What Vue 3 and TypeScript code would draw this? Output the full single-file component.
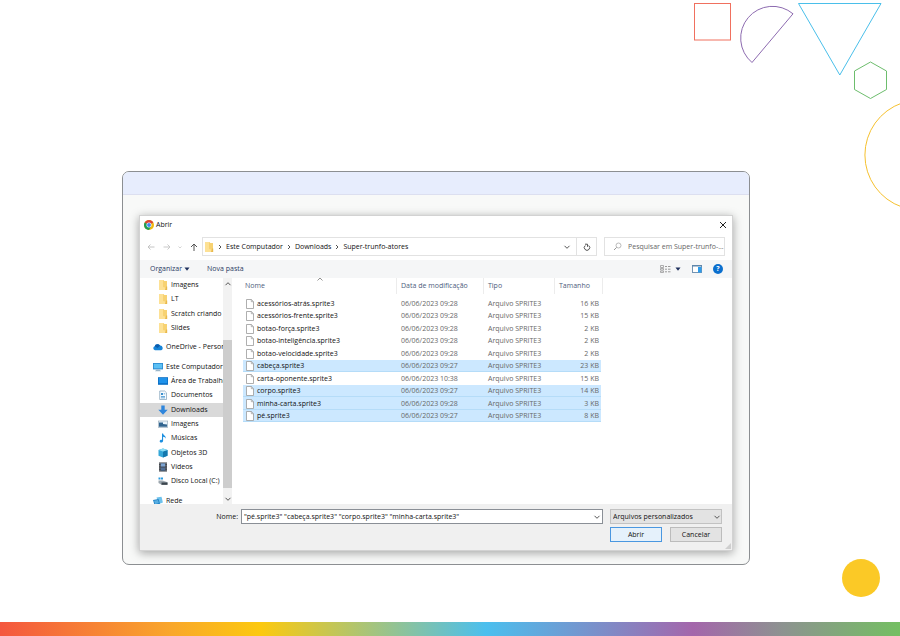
<script setup lang="ts">
import { ref } from 'vue'

interface Place {
  label: string
  icon: string
  level: 0 | 1
  group?: boolean
  current?: boolean
}

interface FileRow {
  name: string
  date: string
  size: string
  selected?: boolean
}

const places: Place[] = [
  { label: 'Imagens', icon: 'folder', level: 1 },
  { label: 'LT', icon: 'folder', level: 1 },
  { label: 'Scratch criando', icon: 'folder', level: 1 },
  { label: 'Slides', icon: 'folder', level: 1 },
  { label: 'OneDrive - Personal', icon: 'cloud', level: 0, group: true },
  { label: 'Este Computador', icon: 'computer', level: 0, group: true },
  { label: 'Área de Trabalho', icon: 'desktop', level: 1 },
  { label: 'Documentos', icon: 'document', level: 1 },
  { label: 'Downloads', icon: 'download', level: 1, current: true },
  { label: 'Imagens', icon: 'picture', level: 1 },
  { label: 'Músicas', icon: 'music', level: 1 },
  { label: 'Objetos 3D', icon: 'cube', level: 1 },
  { label: 'Vídeos', icon: 'film', level: 1 },
  { label: 'Disco Local (C:)', icon: 'disk', level: 1 },
  { label: 'Rede', icon: 'network', level: 0, group: true },
]

const files = ref<FileRow[]>([
  { name: 'acessórios-atrás.sprite3', date: '06/06/2023 09:28', size: '16 KB' },
  { name: 'acessórios-frente.sprite3', date: '06/06/2023 09:28', size: '15 KB' },
  { name: 'botao-força.sprite3', date: '06/06/2023 09:28', size: '2 KB' },
  { name: 'botao-inteligência.sprite3', date: '06/06/2023 09:28', size: '2 KB' },
  { name: 'botao-velocidade.sprite3', date: '06/06/2023 09:28', size: '2 KB' },
  { name: 'cabeça.sprite3', date: '06/06/2023 09:27', size: '23 KB', selected: true },
  { name: 'carta-oponente.sprite3', date: '06/06/2023 10:38', size: '15 KB' },
  { name: 'corpo.sprite3', date: '06/06/2023 09:27', size: '14 KB', selected: true },
  { name: 'minha-carta.sprite3', date: '06/06/2023 09:28', size: '3 KB', selected: true },
  { name: 'pé.sprite3', date: '06/06/2023 09:27', size: '8 KB', selected: true },
])

const path = ['Este Computador', 'Downloads', 'Super-trunfo-atores']
const fileName = ref('"pé.sprite3" "cabeça.sprite3" "corpo.sprite3" "minha-carta.sprite3"')
const search = ref('')
</script>

<template>
  <svg class="symbols" aria-hidden="true">
    <symbol id="folder" viewBox="0 0 10 10">
      <path d="M1 0h4.500l.8 1H9v9H1z" fill="#f7d272" />
      <path d="M1 0h4v7l4 1v2H1z" fill="#fde195" />
      <path d="M8 6.500h1.200V10H7z" fill="#e9b94c" />
    </symbol>
    <symbol id="cloud" viewBox="0 0 10 10">
      <path d="M2 8.200a2 2 0 0 1-.3-3.900A3 3 0 0 1 7 3.600a2.400 2.400 0 0 1 1.200 4.600z" fill="#1684d8" />
      <path d="M1.700 4.300A3 3 0 0 1 7 3.600L4.600 6z" fill="#0b5cad" />
    </symbol>
    <symbol id="computer" viewBox="0 0 10 10">
      <rect x="0" y="1" width="10" height="6.400" fill="#2a88cf" />
      <rect x=".8" y="1.800" width="8.400" height="4.600" fill="#5cc0f4" />
      <path d="M3.500 7.400h3L8 9.200H2z" fill="#9ab6c9" />
    </symbol>
    <symbol id="desktop" viewBox="0 0 10 10">
      <rect x="0" y="1.200" width="10" height="7.600" fill="#0c6fc4" />
      <rect x=".8" y="2" width="8.400" height="5.200" fill="#1f92ea" />
    </symbol>
    <symbol id="document" viewBox="0 0 10 10">
      <path d="M1.700 1h5L8.500 2.800V9.500H1.700z" fill="#f7fbfe" stroke="#7f9fb8" stroke-width=".7" />
      <path d="M3 3h2v2H3zM3 6h4v.8H3zM3 7.600h4v.7H3zM5.700 3.500h1.500v.8H5.700z" fill="#3c90cd" />
    </symbol>
    <symbol id="download" viewBox="0 0 10 10">
      <path d="M3.300 .5h3.400v4.300h3L5 9.700.3 4.800h3z" fill="#2f86dc" />
    </symbol>
    <symbol id="picture" viewBox="0 0 10 10">
      <rect x=".3" y="2" width="9.400" height="6.400" fill="#e9f3fa" stroke="#8fa5b5" stroke-width=".6" />
      <path d="M1 3.500h4v1.500l4 .5v2.200H1z" fill="#31648f" />
    </symbol>
    <symbol id="music" viewBox="0 0 10 10">
      <path d="M4 .5h1.100c.2 2 3.200 2.300 2.600 5.200-.4-1.300-1.300-1.700-2.600-1.900v4c0 1.200-.8 1.800-1.900 1.800S1.500 9 1.700 8.100c.2-1 1.300-1.400 2.300-1.200z" fill="#1c8fe0" />
    </symbol>
    <symbol id="cube" viewBox="0 0 10 10">
      <path d="M.5 2L5 .5 9.500 2v5.700L5 9.500 .5 7.700z" fill="#35a7d8" />
      <path d="M5 3.500L9.500 2v5.700L5 9.500z" fill="#1478ae" />
      <path d="M.5 2L5 .5 9.500 2 5 3.500z" fill="#8bdcf4" />
    </symbol>
    <symbol id="film" viewBox="0 0 10 10">
      <rect x="1" y=".5" width="8" height="9" fill="#35393f" />
      <rect x="2.800" y="1.300" width="4.400" height="3.300" fill="#7da4d2" />
      <rect x="2.800" y="5.400" width="4.400" height="3.300" fill="#516f96" />
      <path d="M1.900 1v8.500M8.100 1v8.500" stroke="#d5d8dc" stroke-width=".7" stroke-dasharray=".9 .9" />
    </symbol>
    <symbol id="disk" viewBox="0 0 10 10">
      <path d="M.5 1.500h2v2h-2zM3 1.500h2v2H3z" fill="#2b9be0" />
      <path d="M.5 4.500h4l5 1.800v2.500H3.500L.5 7z" fill="#9ca6ae" />
      <path d="M3.500 6.500h6v2.300h-6z" fill="#3b444c" />
    </symbol>
    <symbol id="network" viewBox="0 0 10 10">
      <path d="M3.500 1.500l5-.7 1.400 5.700-4 1.500z" fill="#6cc1ec" />
      <path d="M0 4l5.500-1 1.500 4.800-5.300 1.900z" fill="#2181c4" />
      <path d="M1 4.800l3.900-.8 1 3-3.600 1.200z" fill="#58aee2" />
    </symbol>
    <symbol id="sheet" viewBox="0 0 8 10">
      <path d="M.5.5h4.800L7.500 2.700v6.800h-7z" fill="#fff" stroke="#9a9a9a" stroke-width=".8" />
      <path d="M5.300.5v2.200h2.200" fill="none" stroke="#9a9a9a" stroke-width=".7" />
    </symbol>
    <symbol id="chevron" viewBox="0 0 8 8">
      <path d="M1.500 2.800L4 5.300l2.500-2.500" fill="none" stroke="currentColor" />
    </symbol>
    <symbol id="triangle" viewBox="0 0 6 6">
      <path d="M.5 1.500h5L3 4.700z" fill="currentColor" />
    </symbol>
  </svg>

  <div class="page">
    <svg class="shapes" viewBox="0 0 220 220" fill="none" aria-hidden="true">
      <rect x="14.500" y="3.500" width="36" height="36.500" stroke="#f0705f" />
      <path d="M72 62.500A31.700 31.700 0 0 1 113 13.800z" stroke="#8d6bb0" />
      <path d="M118.500 3.500h82.500L159.800 75z" stroke="#4abfea" />
      <path d="M190.500 62l16 9v18.500l-16 9-16-9V71z" stroke="#6dbd6d" />
      <path d="M222 103A55 55 0 0 0 222 207" stroke="#f6c12f" />
    </svg>

    <main class="stage">
      <div class="window">
        <div class="band"></div>
        <div class="backdrop">
          <section class="dialog" role="dialog" aria-labelledby="dialog-title">
            <header class="title">
              <svg class="chrome" viewBox="0 0 20 20" aria-hidden="true">
                <circle cx="10" cy="10" r="10" fill="#f2b90f" />
                <path d="M10 10L1.340 5A10 10 0 0 1 18.660 5z" fill="#dc4437" />
                <path d="M1.340 5A10 10 0 0 0 10 20l4.300-7.500L10 10z" fill="#1f9d58" />
                <circle cx="10" cy="10" r="5" fill="#fff" />
                <circle cx="10" cy="10" r="3.900" fill="#4285f4" />
              </svg>
              <h1 id="dialog-title">Abrir</h1>
              <button class="close" type="button" aria-label="Fechar">
                <svg viewBox="0 0 8 8"><path d="M1 1l6 6M7 1L1 7" stroke="#222" fill="none" /></svg>
              </button>
            </header>

            <nav class="navigation">
              <div class="arrows">
                <button type="button" aria-label="Voltar">
                  <svg viewBox="0 0 8 8"><path d="M7.500 4H1M3.500 1.500L1 4l2.500 2.500" stroke="#c4c4c4" fill="none" /></svg>
                </button>
                <button type="button" aria-label="Avançar">
                  <svg viewBox="0 0 8 8"><path d="M.5 4H7M4.500 1.500L7 4 4.500 6.500" stroke="#c9c9c9" fill="none" /></svg>
                </button>
                <button class="recent" type="button" aria-label="Locais recentes">
                  <svg viewBox="0 0 8 8"><path d="M2.500 3.500L4 5l1.500-1.500" stroke="#d4d4d4" fill="none" /></svg>
                </button>
                <button type="button" aria-label="Acima">
                  <svg viewBox="0 0 8 8"><path d="M4 8V1M1 4l3-3 3 3" stroke="#555" fill="none" /></svg>
                </button>
              </div>
              <div class="address">
                <svg class="icon"><use href="#folder" /></svg>
                <template v-for="step in path" :key="step">
                  <svg class="step" viewBox="0 0 8 8" aria-hidden="true"><path d="M3 2l2 2-2 2" stroke="#555" fill="none" /></svg>
                  <button type="button">{{ step }}</button>
                </template>
                <button class="history" type="button" aria-label="Locais anteriores">
                  <svg class="small"><use href="#chevron" /></svg>
                </button>
              </div>
              <button class="refresh" type="button" aria-label="Atualizar">
                <svg viewBox="0 0 8 8"><path d="M2.300 2.500a2.700 2.700 0 1 0 3.400 0M2 1.200h2.500v2.600" stroke="#555" fill="none" /></svg>
              </button>
              <label class="search">
                <svg viewBox="0 0 9 9" aria-hidden="true"><path d="M1 8l2.700-2.700" stroke="#999" /><circle cx="5.500" cy="3.500" r="2.500" fill="none" stroke="#aaa" stroke-width=".8" /></svg>
                <input v-model="search" type="text" placeholder="Pesquisar em Super-trunfo-..." aria-label="Pesquisar" />
              </label>
            </nav>

            <div class="toolbar">
              <button type="button">Organizar <svg class="tri"><use href="#triangle" /></svg></button>
              <button type="button">Nova pasta</button>
              <div class="views">
                <button type="button" aria-label="Modo de exibição">
                  <svg class="list" viewBox="0 0 11 8"><path d="M.5 .5h3v2h-3zM.5 3.500h3v1.500h-3zM.5 6h3v1.500h-3z" fill="none" stroke="#999" stroke-width=".8" /><path d="M5 1.500h2M8 1.500h2.500M5 4.200h2M8 4.200h2.500M5 6.800h2M8 6.800h2.500" stroke="#999" /></svg>
                  <svg class="tri"><use href="#triangle" /></svg>
                </button>
                <button type="button" aria-label="Painel de visualização">
                  <svg class="pane" viewBox="0 0 10 8"><rect x=".5" y=".5" width="9" height="7" fill="#fff" stroke="#7394b3" /><path d="M0 0h10v1.500H0z" fill="#5e86ab" /><path d="M6 2h3.500v5.500H6z" fill="#2d9bea" /></svg>
                </button>
                <button class="help" type="button" aria-label="Ajuda">?</button>
              </div>
            </div>

            <div class="panes">
              <aside class="tree">
                <ul>
                  <li v-for="(place, i) in places" :key="i" :class="{ nested: place.level === 1, group: place.group, current: place.current }">
                    <a href="#"><svg class="icon" aria-hidden="true"><use :href="'#' + place.icon" /></svg>{{ place.label }}</a>
                  </li>
                </ul>
                <div class="scrollbar" aria-hidden="true">
                  <svg class="small flip"><use href="#chevron" /></svg>
                  <div class="thumb"></div>
                  <svg class="small"><use href="#chevron" /></svg>
                </div>
              </aside>

              <div class="files">
                <table>
                  <thead>
                    <tr>
                      <th class="name" aria-sort="ascending">Nome<svg class="sort" viewBox="0 0 8 8"><path d="M1.500 5.500L4 3l2.500 2.500" fill="none" stroke="#777" stroke-width=".8" /></svg></th>
                      <th class="date">Data de modificação</th>
                      <th class="type">Tipo</th>
                      <th class="size">Tamanho</th>
                    </tr>
                  </thead>
                  <tbody>
                    <tr v-for="file in files" :key="file.name" :class="{ selected: file.selected }" @click="file.selected = !file.selected">
                      <td class="name"><svg aria-hidden="true"><use href="#sheet" /></svg>{{ file.name }}</td>
                      <td>{{ file.date }}</td>
                      <td>Arquivo SPRITE3</td>
                      <td class="size">{{ file.size }}</td>
                    </tr>
                  </tbody>
                </table>
              </div>
            </div>

            <form class="actions" @submit.prevent>
              <label for="file-name">Nome:</label>
              <div class="combo">
                <input id="file-name" v-model="fileName" type="text" />
                <svg class="small" aria-hidden="true"><use href="#chevron" /></svg>
              </div>
              <div class="filter">
                <select aria-label="Tipo de arquivo">
                  <option>Arquivos personalizados</option>
                </select>
                <svg class="small" aria-hidden="true"><use href="#chevron" /></svg>
              </div>
              <div class="buttons">
                <button class="primary" type="submit">Abrir</button>
                <button type="button">Cancelar</button>
              </div>
              <svg class="grip" viewBox="0 0 6 6" aria-hidden="true"><path d="M6 0v6H0z" fill="#cfcfcf" /></svg>
            </form>
          </section>
        </div>
      </div>
    </main>

    <div class="dot"></div>
    <footer class="stripe"></footer>
  </div>
</template>

<style>
body {
  margin: 0;
  background: #fff;
}
</style>

<style scoped>
* {
  box-sizing: border-box;
}

.symbols {
  position: absolute;
  width: 0;
  height: 0;
}

.page {
  position: relative;
  display: flex;
  flex-direction: column;
  min-height: 100vh;
  overflow: hidden;
  font-family: "Open Sans", "Noto Sans", sans-serif;
  font-size: 7px;
  line-height: 10px;
  color: #111;
}

.shapes {
  position: absolute;
  top: 0;
  right: 0;
  width: 220px;
  height: 220px;
}

.dot {
  position: absolute;
  right: 20px;
  bottom: 39px;
  width: 38px;
  height: 38px;
  border-radius: 50%;
  background: #fbc926;
}

.stripe {
  height: 14px;
  margin-top: auto;
  background: linear-gradient(90deg, #f4573f 0%, #f9a72b 19%, #fcc90f 29%, #4bbfee 54%, #a466ab 77%, #8d9390 87%, #74bf62 100%);
}

.stage {
  padding: 171px 150px 24px 122px;
}

.window {
  overflow: hidden;
  border: 1px solid #8c8f92;
  border-radius: 7px;
  background: #f8f9f8;
}

.band {
  height: 23px;
  border-bottom: 1px solid #dcdff0;
  background: #e7edfd;
}

.backdrop {
  padding: 20px 16px 13px;
}

.dialog {
  border: 1px solid #d2d2d2;
  background: #fff;
  box-shadow: 0 2px 9px rgba(0, 0, 0, 0.35);
}

button,
input,
select {
  margin: 0;
  padding: 0;
  border: 0;
  border-radius: 0;
  background: none;
  color: inherit;
  font: inherit;
}

button {
  display: flex;
  align-items: center;
  justify-content: center;
}

svg {
  flex: none;
}

.icon {
  width: 10px;
  height: 10px;
}

.small {
  width: 8px;
  height: 8px;
  color: #555;
}

.tri {
  width: 6px;
  height: 6px;
  color: #1e2f5c;
}

.title {
  display: flex;
  align-items: center;
  gap: 2px;
  height: 17px;
  padding: 0 5px 0 4px;
}

.title h1 {
  margin: 0;
  font-size: 7px;
  font-weight: 400;
}

.chrome {
  width: 10px;
  height: 10px;
}

.close {
  margin-left: auto;
}

.close svg,
.refresh svg,
.arrows svg {
  width: 8px;
  height: 8px;
}

.navigation {
  display: flex;
  align-items: center;
  height: 27px;
  padding: 0 7px 0 6px;
}

.arrows {
  display: flex;
  align-items: center;
  justify-content: space-between;
  width: 56px;
  padding: 0 4px 0 1px;
}

.arrows .recent {
  width: 4px;
}

.address {
  display: flex;
  flex: 1;
  align-items: center;
  height: 19px;
  padding: 0 5px 0 1px;
  border: 1px solid #e2e2e2;
}

.step {
  width: 8px;
  height: 8px;
  margin: 0 2px;
}

.history {
  margin-left: auto;
}

.refresh {
  width: 20px;
  height: 19px;
  border: 1px solid #e2e2e2;
  border-left: 0;
}

.search {
  display: flex;
  align-items: center;
  gap: 6px;
  width: 121px;
  height: 19px;
  margin-left: 7px;
  padding: 0 0 0 8px;
  border: 1px solid #e2e2e2;
}

.search svg {
  width: 9px;
  height: 9px;
}

.search input {
  flex: 1;
  min-width: 0;
}

.search input::placeholder {
  color: #666;
  opacity: 1;
}

.toolbar {
  display: flex;
  align-items: center;
  gap: 17px;
  height: 18px;
  padding: 0 9px 0 10px;
  background: #f5f6f7;
  color: #2b3a63;
}

.toolbar button {
  gap: 2px;
}

.views {
  display: flex;
  align-items: center;
  gap: 11px;
  margin-left: auto;
}

.views button {
  gap: 4px;
}

.list {
  width: 11px;
  height: 8px;
}

.pane {
  width: 10px;
  height: 8px;
}

.views .help {
  width: 10px;
  height: 10px;
  border-radius: 50%;
  background: #0b6fce;
  color: #fff;
  font-weight: 700;
}

.panes {
  display: flex;
  height: 226px;
}

.tree {
  display: flex;
  width: 92px;
  overflow: hidden;
}

.tree ul {
  display: flex;
  flex: 1;
  flex-direction: column;
  min-width: 0;
  height: 230px;
  margin: 0;
  padding: 0;
  overflow: hidden;
  list-style: none;
}

.tree li {
  display: flex;
  flex: 1;
  align-items: center;
  padding-left: 13px;
}

.tree .nested {
  padding-left: 18px;
}

.tree .group {
  margin-top: 5px;
}

.tree .current {
  background: #d9d9d9;
}

.tree a {
  display: flex;
  align-items: center;
  gap: 3px;
  color: inherit;
  text-decoration: none;
  white-space: nowrap;
}

.scrollbar {
  display: flex;
  flex-direction: column;
  align-items: center;
  justify-content: space-between;
  width: 9px;
  padding: 2px 0 1px;
  background: #f2f2f2;
}

.flip {
  transform: rotate(180deg);
}

.thumb {
  width: 9px;
  height: 148px;
  margin-top: auto;
  margin-bottom: 7px;
  background: #cdcdcd;
}

.files {
  flex: 1;
  padding-left: 11px;
}

table {
  width: 360px;
  table-layout: fixed;
  border-collapse: separate;
  border-spacing: 0;
}

th {
  position: relative;
  height: 16px;
  padding: 0 4px;
  border-right: 1px solid #ececec;
  color: #4d5d7d;
  font-weight: 400;
  text-align: left;
}

th.name {
  width: 154px;
  padding-left: 2px;
}

th.date {
  width: 87px;
}

th.type {
  width: 71px;
}

.sort {
  position: absolute;
  top: -3px;
  left: 73px;
  width: 8px;
  height: 8px;
}

tbody::before {
  content: "";
  display: block;
  height: 3px;
}

td {
  height: 12px;
  padding: 0 4px;
  color: #686868;
  line-height: 10px;
  white-space: nowrap;
}

tr:nth-child(odd) td {
  height: 13px;
}

td.name {
  padding-left: 3px;
  color: #111;
}

td.name svg {
  width: 8px;
  height: 10px;
  margin-right: 3px;
  vertical-align: top;
}

td.size {
  padding-right: 2px;
  border-right: 2px solid #fff;
  text-align: right;
}

.selected td {
  background: #cce8ff;
  box-shadow: inset 0 -1px #b5dcf8;
}

.actions {
  position: relative;
  display: grid;
  grid-template-columns: 98px 1fr 112px;
  gap: 3px 0;
  padding: 5px 10px 8px 0;
  background: #f0f0f0;
}

.actions label {
  align-self: center;
  text-align: right;
}

.combo {
  display: flex;
  align-items: center;
  height: 15px;
  margin: 0 7px 0 3px;
  padding: 0 1px 0 2px;
  border: 1px solid #8a8f96;
  background: #fff;
}

.combo input {
  flex: 1;
  min-width: 0;
}

.filter {
  display: grid;
  align-items: center;
}

.filter > * {
  grid-area: 1 / 1;
}

.filter .small {
  justify-self: end;
  margin-right: 1px;
  pointer-events: none;
}

.filter select {
  width: 100%;
  height: 15px;
  padding: 0 2px;
  border: 1px solid #c2c2c2;
  background: #e3e3e3;
  appearance: none;
}

.buttons {
  display: flex;
  grid-column: 3;
  justify-content: space-between;
}

.buttons button {
  width: 52px;
  height: 15px;
  border: 1px solid #bcbcbc;
  background: #e3e3e3;
}

.buttons .primary {
  border-color: #4a97e0;
  background: #e5f1fb;
}

.grip {
  position: absolute;
  right: 1px;
  bottom: 1px;
  width: 6px;
  height: 6px;
}
</style>
